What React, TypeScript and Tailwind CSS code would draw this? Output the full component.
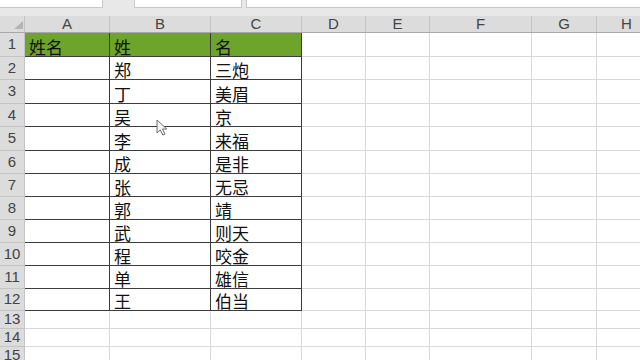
const cols = [
  { key: 'A', w: 'w-[85px]' },
  { key: 'B', w: 'w-[101px]' },
  { key: 'C', w: 'w-[91px]' },
  { key: 'D', w: 'w-[64px]' },
  { key: 'E', w: 'w-[64px]' },
  { key: 'F', w: 'w-[102px]' },
  { key: 'G', w: 'w-[65px]' },
  { key: 'H', w: 'w-[60px]' },
];

const data = [
  ['姓名', '姓', '名'],
  ['', '郑', '三炮'],
  ['', '丁', '美眉'],
  ['', '吴', '京'],
  ['', '李', '来福'],
  ['', '成', '是非'],
  ['', '张', '无忌'],
  ['', '郭', '靖'],
  ['', '武', '则天'],
  ['', '程', '咬金'],
  ['', '单', '雄信'],
  ['', '王', '伯当'],
];

// row heights differ a pixel here and there, like the sheet's zoom rounding
const heights = [
  'h-[24px]', 'h-[23px]', 'h-[24px]', 'h-[23px]', 'h-[24px]', 'h-[23px]',
  'h-[23px]', 'h-[23px]', 'h-[23px]', 'h-[23px]', 'h-[23px]', 'h-[22px]',
];

const cjk = "font-['Noto_Sans_CJK_SC',sans-serif]";
const ui = "font-['Liberation_Sans','Noto_Sans',sans-serif]";

function RowHeader({ n, h }: { n: number; h: string }) {
  return (
    <div className={`w-[25px] ${h} shrink-0 bg-[#dcdcdc] border-r border-b border-[#c4c4c4] flex items-center justify-center text-[15px] text-[#444] ${ui}`}>
      {n}
    </div>
  );
}

function Cursor() {
  return (
    <svg className="absolute left-[156px] top-[119px]" width="13" height="17" viewBox="0 0 13 17">
      <path d="M1 1 L1 14 L4.2 11 L6.8 16 L9 15 L6.5 10 L10.8 10 Z" fill="#f4f4f4" stroke="#6e6e6e" strokeWidth="1" strokeLinejoin="round" />
    </svg>
  );
}

export default function App() {
  return (
    <div className="w-[640px] h-[360px] overflow-hidden bg-white relative">
      {/* remains of the formula bar */}
      <div className="h-[16px] bg-[#e8e8e8] flex items-start">
        <div className="w-[103px] h-[8px] bg-white border-b border-r border-[#c8c8c8]" />
        <div className="w-[31px]" />
        <div className="w-[108px] h-[8px] bg-white border-b border-x border-[#c8c8c8]" />
        <div className="w-[4px]" />
        <div className="flex-1 h-[8px] bg-white border-b border-l border-[#c8c8c8]" />
      </div>

      {/* column headers */}
      <div className={`flex h-[17px] bg-[#dcdcdc] border-b border-[#a8a8a8] ${ui}`}>
        <div className="w-[25px] shrink-0 border-r border-[#c4c4c4] relative">
          <div className="absolute right-[1px] bottom-[3px] w-0 h-0 border-l-[9px] border-l-transparent border-b-[8px] border-b-[#b4b4b4]" />
        </div>
        {cols.map((c) => (
          <div key={c.key} className={`${c.w} shrink-0 border-r border-[#c4c4c4] flex items-center justify-center text-[15px] text-[#444]`}>
            {c.key}
          </div>
        ))}
      </div>

      {/* data rows */}
      {data.map((row, r) => (
        <div key={r} className="flex">
          <RowHeader n={r + 1} h={heights[r]} />
          {cols.map((c, ci) => {
            const inTable = ci < 3;
            const fill = inTable && r === 0 ? 'bg-[#6ca42c]' : '';
            const border = inTable ? 'border-[#3c3c3c]' : 'border-[#d8d8d8]';
            return (
              <div
                key={c.key}
                className={`${c.w} ${heights[r]} shrink-0 border-r border-b ${border} ${fill} flex items-end pl-[4px] pb-[1px] text-[17px] leading-none text-[#111] ${cjk}`}
              >
                {inTable ? row[ci] : ''}
              </div>
            );
          })}
        </div>
      ))}

      {/* empty rows below the table */}
      {[13, 14, 15].map((n) => (
        <div key={n} className="flex">
          <RowHeader n={n} h="h-[18px]" />
          {cols.map((c) => (
            <div key={c.key} className={`${c.w} h-[18px] shrink-0 border-r border-b border-[#d8d8d8]`} />
          ))}
        </div>
      ))}

      <Cursor />
    </div>
  );
}
